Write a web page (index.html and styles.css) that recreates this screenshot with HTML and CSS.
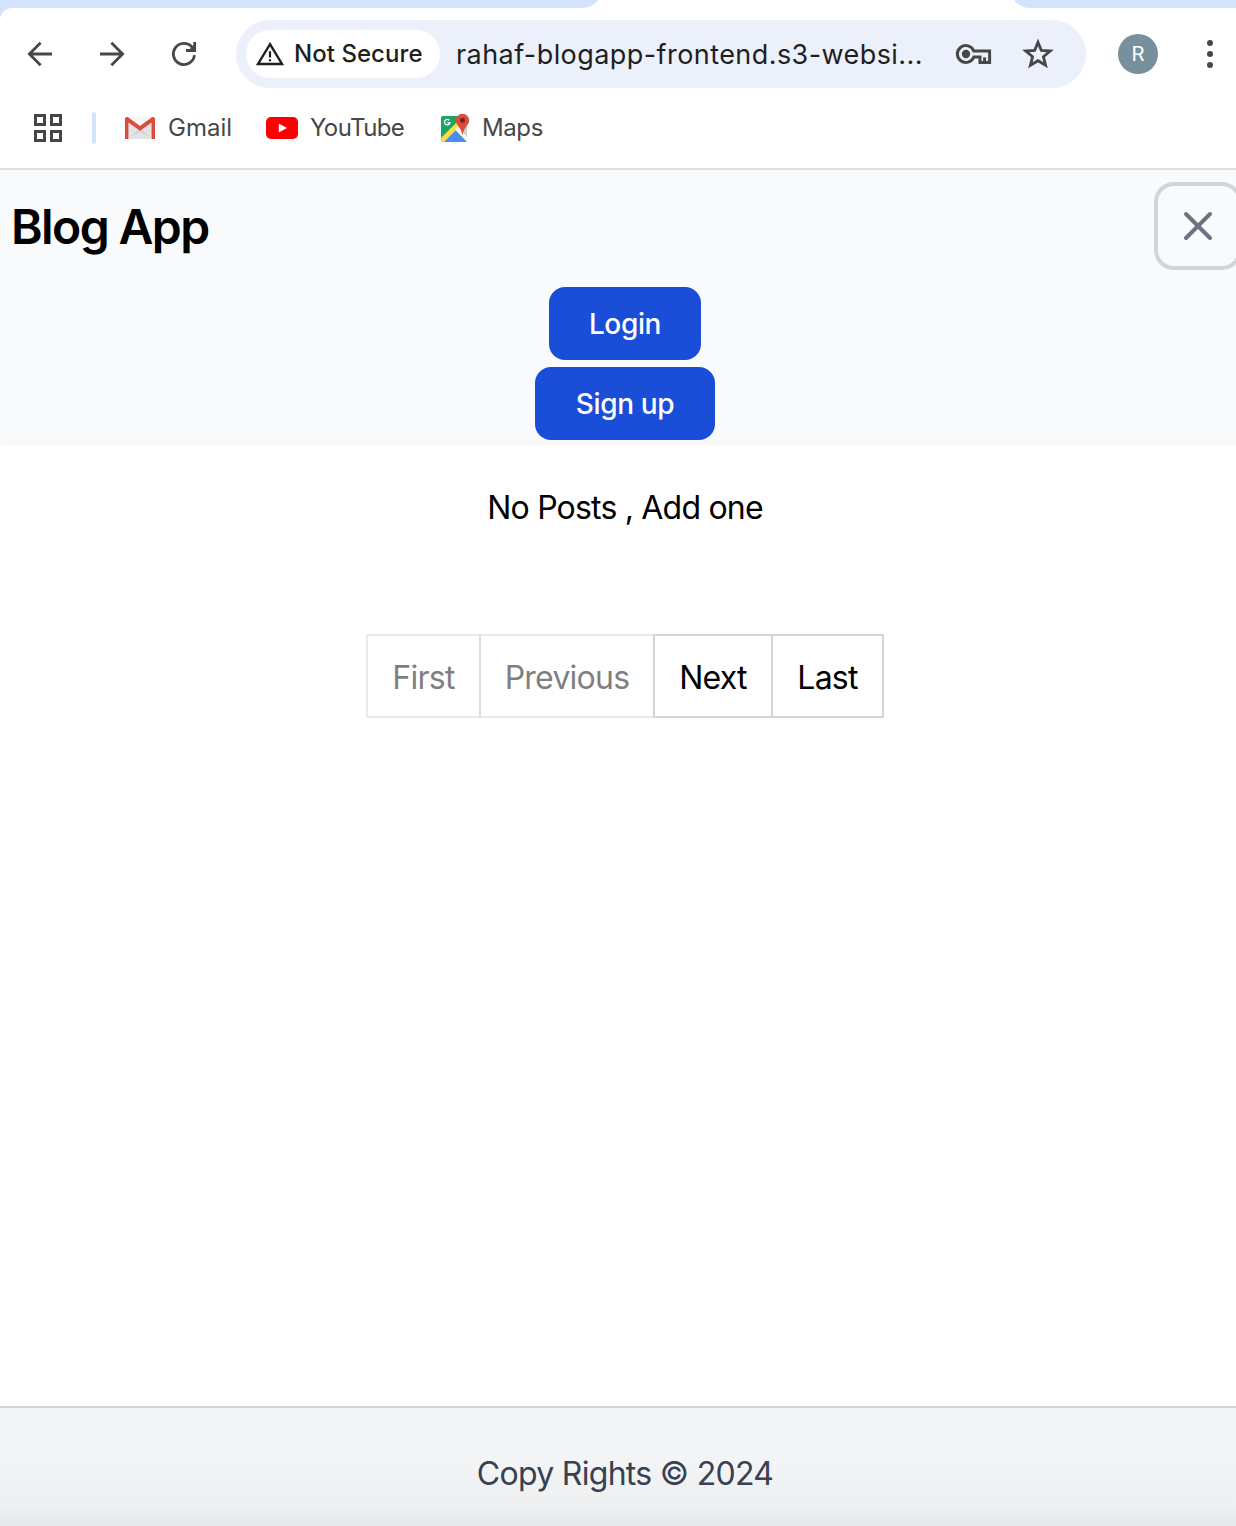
FILE: index.html
```html
<!DOCTYPE html>
<html lang="en">
<head>
<meta charset="utf-8">
<title>Blog App</title>
<link rel="stylesheet" href="styles.css">
</head>
<body>
<div class="window">
  <header class="browser">
    <div class="tabstrip">
      <div class="tab-inactive tab-left"></div>
      <div class="tab-active"></div>
      <div class="tab-inactive tab-right"></div>
    </div>
    <div class="toolbar">
      <svg class="tool back" width="28" height="28" viewBox="0 0 28 28"><path d="M26 14H4M14.6 2.8 3.4 14l11.2 11.2"/></svg>
      <svg class="tool forward" width="28" height="28" viewBox="0 0 28 28"><path d="M2 14h22M13.4 2.800 24.600 14 13.400 25.200"/></svg>
      <svg class="tool reload" width="28" height="28" viewBox="0 0 28 28"><path d="M24.500 15.200A10.600 10.600 0 1 1 22 7l2.600 3M24.700 2v8.500H16"/><path class="tip" d="M18.500 10.500 24.500 4v6.500z"/></svg>
      <div class="omnibox">
        <div class="chip">
          <svg width="30" height="28" viewBox="0 0 30 28"><path class="warn" d="M15 4.200 27 24H3Z"/><path class="bang" d="M15 11.200v6.200M15 19.200v2"/></svg>
          <span class="chip-text">Not Secure</span>
        </div>
        <span class="url">rahaf-blogapp-frontend.s3-websi...</span>
        <svg class="key" width="38" height="24" viewBox="0 0 38 24"><path d="M19.800 9A8.500 8.500 0 1 0 19.800 15H26V20.400H35.600V9Z"/><circle cx="12" cy="12" r="4.200"/><path class="teeth" d="M30.600 20v-4.600"/></svg>
        <svg class="star" width="32" height="32" viewBox="0 0 32 32"><path d="m16 4.200 3.300 8.100 9 .7-6.900 5.700 2.200 8.600-7.600-4.600-7.600 4.600 2.200-8.600L3.700 13l9-.7Z"/></svg>
      </div>
      <div class="avatar">R</div>
      <div class="menu"><i></i><i></i><i></i></div>
    </div>
    <div class="bookmarks">
      <svg class="apps" width="28" height="28" viewBox="0 0 28 28"><path d="M1.500 1.500h9v9h-9zM17.500 1.500h9v9h-9zM1.500 17.500h9v9h-9zM17.500 17.500h9v9h-9z"/></svg>
      <div class="divider"></div>
      <div class="bookmark gmail">
        <svg width="32" height="24" viewBox="0 0 32 24"><path fill="#e4e4e4" d="M3 1h26v22H3z"/><path fill="#f5f5f5" d="m4 1 12 9L28 1z"/><path fill="#d2d2d2" d="m6 21 10-9 10 9-10-5z"/><path fill="#dd4b3e" d="M1 3C1 1 3 .4 4.400 1.400L16 10 27.600 1.400C29 .4 31 1 31 3v20h-3.400V6.400L16 14.800 4.400 6.400V23H1z"/></svg>
        <span>Gmail</span>
      </div>
      <div class="bookmark youtube">
        <svg width="32" height="22" viewBox="0 0 32 22"><rect width="32" height="22" rx="5" fill="#f00"/><path fill="#fff" d="M12.800 6.400 21 11l-8.200 4.600z"/></svg>
        <span>YouTube</span>
      </div>
      <div class="bookmark maps">
        <svg width="30" height="30" viewBox="0 0 30 30">
          <defs><clipPath id="tile"><rect x="1" y="3" width="26" height="26" rx="2"/></clipPath></defs>
          <g clip-path="url(#tile)"><path fill="#1fa463" d="M1 3h26v26H1z"/><path fill="#cfcfcf" d="M14 16 27 3v26z"/><path fill="#4b8bf5" d="m14 17 12 12H2z"/><path fill="#fbdb48" d="m0 26 19-19 2 5L2 31z"/><path fill="#f7f7f7" d="m15 16 3-3 10 12v5z"/></g>
          <path fill="none" stroke="#fff" stroke-width="1.300" d="M9.300 7.200A2.800 2.800 0 1 0 10 9.700H7.300"/>
          <path fill="#dd4b3e" d="M22.500.8a6.600 6.600 0 0 0-6.600 6.600c0 5 5.200 6.200 6.400 14.200h.4C23.900 13.600 29.100 12.400 29.100 7.400A6.600 6.600 0 0 0 22.500.8z"/><circle cx="22.500" cy="7.300" r="2.500" fill="#7d231d"/>
        </svg>
        <span>Maps</span>
      </div>
    </div>
  </header>

  <div class="page">
    <nav class="nav">
      <div class="nav-top">
        <span class="brand">Blog App</span>
        <button class="close" aria-label="Close menu"><svg width="32" height="32" viewBox="0 0 32 32"><path d="M4 4l24 24M28 4 4 28"/></svg></button>
      </div>
      <div class="nav-links">
        <button class="btn login">Login</button>
        <button class="btn signup">Sign up</button>
      </div>
    </nav>
    <main class="main">
      <p class="empty">No Posts , Add one</p>
      <div class="pagination">
        <button class="pg first" disabled>First</button>
        <button class="pg previous" disabled>Previous</button>
        <button class="pg next">Next</button>
        <button class="pg last">Last</button>
      </div>
    </main>
    <footer class="footer">Copy Rights © 2024</footer>
  </div>
</div>
</body>
</html>
```
FILE: styles.css
```css
* { box-sizing: border-box; }

body {
  margin: 0;
  background: #fff;
  font-family: Inter, "Liberation Sans", sans-serif;
}

button { font: inherit; letter-spacing: inherit; }

svg { display: block; flex: none; }

.window {
  display: flex;
  flex-direction: column;
  width: 1236px;
  height: 1526px;
  overflow: hidden;
}

/* Browser frame */
.browser {
  height: 170px;
  border-bottom: 2px solid #dfdfdf;
  background: linear-gradient(#d3e3fd 20px, #fff 20px);
}

/* Only the bottom 8px of the tabs is in view */
.tabstrip {
  display: flex;
  align-items: flex-end;
  height: 8px;
  background: #fff;
  overflow: hidden;
}

.tab-inactive { height: 20px; background: #d3e3fd; }
.tab-left { width: 602px; border-bottom-right-radius: 20px; }
.tab-active { width: 408px; }
.tab-right { flex: 1; border-bottom-left-radius: 20px; }

.toolbar {
  display: flex;
  align-items: center;
  height: 92px;
  padding-left: 26px;
  background: #fff;
  border-top-left-radius: 12px;
}

.tool { fill: none; stroke: #474747; stroke-width: 2.8; }
.tool .tip { fill: #474747; stroke: none; }
.forward, .reload { margin-left: 44px; }

.omnibox {
  display: flex;
  align-items: center;
  width: 850px;
  height: 68px;
  margin-left: 38px;
  padding-left: 10px;
  border-radius: 34px;
  background: #ebf0fa;
}

.chip {
  display: flex;
  align-items: center;
  width: 194px;
  height: 48px;
  padding-left: 9px;
  border-radius: 24px;
  background: #fff;
}

.warn { fill: none; stroke: #1f1f1f; stroke-width: 2.4; }
.bang { stroke: #1f1f1f; stroke-width: 2.2; }

.chip-text {
  margin-left: 9px;
  padding-bottom: 2px;
  color: #1f1f1f;
  font-size: 24px;
  font-weight: 500;
  letter-spacing: 0.05px;
  white-space: nowrap;
}

.url {
  width: 482px;
  margin-left: 16px;
  color: #1f1f1f;
  font-size: 27px;
  letter-spacing: 0.43px;
  white-space: nowrap;
}

.key { margin-left: 16px; fill: none; stroke: #474747; stroke-width: 3; }
.key circle { fill: #474747; stroke: none; }
.star { margin-left: 30px; fill: none; stroke: #474747; stroke-width: 2.8; }

.avatar {
  width: 40px;
  height: 40px;
  margin-left: 32px;
  border-radius: 50%;
  background: #78909c;
  color: #fff;
  font: 21px/41px Roboto, sans-serif;
  text-align: center;
}

.menu { display: flex; flex-direction: column; gap: 5px; margin-left: 49px; }
.menu i { width: 6px; height: 6px; border-radius: 50%; background: #474747; }

.bookmarks {
  display: flex;
  align-items: center;
  height: 56px;
  padding-left: 34px;
  color: #474747;
  font-size: 24px;
}

.apps { fill: none; stroke: #474747; stroke-width: 3; }
.divider { width: 4px; height: 32px; margin-left: 30px; border-radius: 2px; background: #d3e3fd; }
.bookmark { display: flex; align-items: center; }
.bookmark span { margin-left: 12px; padding-bottom: 2px; }
.gmail { width: 142px; margin-left: 28px; }
.youtube { width: 174px; letter-spacing: -0.6px; }
.maps { letter-spacing: -0.4px; }

/* Blog page: slightly wider than the window */
.page {
  display: flex;
  flex: 1;
  flex-direction: column;
  width: 1250px;
}

.nav {
  height: 272px;
  padding: 12px 8px 0 12px;
  background: #f9fafb;
  box-shadow: 0 2px 4px rgba(0, 0, 0, 0.05);
}

.nav-top { display: flex; align-items: center; justify-content: space-between; height: 88px; }

.brand {
  margin-left: -1px;
  color: #000;
  font-size: 48px;
  font-weight: 600;
  letter-spacing: -1.6px;
}

.close {
  display: grid;
  place-items: center;
  width: 88px;
  height: 88px;
  padding: 0;
  border: 4px solid #d1d5db;
  border-radius: 20px;
  background: none;
}

.close path { stroke: #6b7280; stroke-width: 4; stroke-linecap: round; }

.nav-links {
  display: flex;
  flex-direction: column;
  align-items: center;
  gap: 7px;
  margin: 17px -8px 0 -12px;
}

.btn {
  height: 73px;
  padding: 0;
  border: 0;
  border-radius: 16px;
  background: #1a4ed8;
  color: #fff;
  font-size: 28px;
  font-weight: 500;
  letter-spacing: -0.35px;
}

.login { width: 152px; }
.signup { width: 180px; }

.main { flex: 1; display: flex; flex-direction: column; align-items: center; }

.empty {
  margin: 42px 0 0;
  color: #000;
  font-size: 32px;
  letter-spacing: -0.8px;
  line-height: 48px;
}

.pagination { display: flex; margin-top: 102px; font-size: 32px; letter-spacing: -0.75px; }

.pg {
  height: 84px;
  padding: 2px 0 0;
  border: 2px solid #d1d5db;
  background: none;
  color: #000;
}

.pg + .pg { margin-left: -2px; }
.pg:disabled { opacity: 0.5; }
.first { width: 115px; }
.previous { width: 176px; }
.next { width: 120px; }
.last { width: 113px; }

.footer {
  height: 120px;
  border-top: 2px solid #d1d5db;
  background: linear-gradient(#f3f4f6 45%, #eeeff1 82%, #e7e8e9);
  color: #374151;
  font-size: 32px;
  letter-spacing: -0.7px;
  line-height: 131px;
  text-align: center;
}
```
